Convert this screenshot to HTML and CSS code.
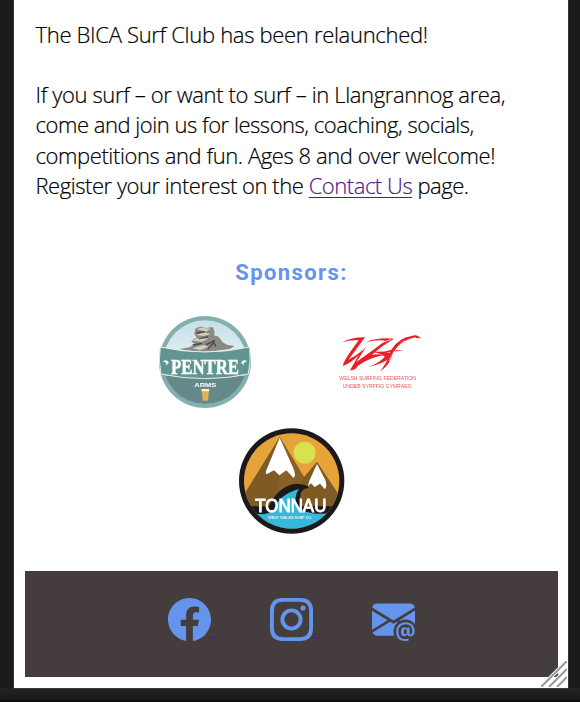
FILE: index.html
```html
<!DOCTYPE html>
<html lang="en">
<head>
<meta charset="utf-8">
<title>BICA Surf Club</title>
<link rel="stylesheet" href="styles.css">
</head>
<body>
<main class="page">
  <section class="news">
    <p><span class="line l1">The BICA Surf Club has been relaunched!</span></p>
    <p>
      <span class="line l2">If you surf – or want to surf – in Llangrannog area,</span>
      <span class="line l3">come and join us for lessons, coaching, socials,</span>
      <span class="line l4">competitions and fun. Ages 8 and over welcome!</span>
      <span class="line l5">Register your interest on the <a href="#">Contact Us</a> page.</span>
    </p>
  </section>
  <h2>Sponsors:</h2>
  <section class="sponsors">
    <svg class="pentre" viewBox="0 0 330 330">
      <defs><clipPath id="pc"><circle cx="165" cy="171" r="126"/></clipPath>
      <linearGradient id="sky" x2="0" y2="1"><stop stop-color="#c6dfe6"/><stop offset=".5" stop-color="#e6f1f4"/></linearGradient></defs>
      <circle cx="165" cy="171" r="138" fill="#83b0ae"/>
      <circle cx="165" cy="171" r="125" fill="url(#sky)"/>
      <g clip-path="url(#pc)"><path d="M20 208Q165 232 310 208V320H20Z" fill="#65888a"/></g>
      <path d="M88 132l30-5 18-10-12-7 7-8 10-2-8-13 4-18 16-4 15 4 20-3 6 14-2 11 14 4 12 17 13 7 22 4-12 8-45 7-55 3Z" fill="#8b8981"/>
      <path d="M139 72l15-4 28 3-14 9ZM125 107l28-11 22 5-20 9ZM138 90l25-8 20 5-22 6ZM127 130l34-10 14 5-25 11Z" fill="#d0cdc3"/>
      <path d="M140 84l25-4M147 101l27-5M128 120l28-5M169 119l26-13M173 133l18-20 7 12" fill="none" stroke="#454743" stroke-width="4"/>
      <path d="M31 126Q165 156 299 126Q304 166 295 207Q165 235 33 207Q24 166 31 126Z" fill="#5f9692" stroke="#e1efed" stroke-width="3"/>
      <text x="63" y="208" fill="#fff" stroke="#fff" stroke-width="1.5" font-family="Liberation Serif" font-size="66" font-weight="700" textLength="204" lengthAdjust="spacingAndGlyphs">PENTRE</text>
      <path d="M39 169q9-8 18 4l-9 8 1-7ZM291 169q-9-8-18 4l9 8-1-7Z" fill="#fff"/>
      <text x="133" y="246" fill="#fff" font-family="Liberation Sans" font-size="18" font-weight="700" textLength="66" lengthAdjust="spacingAndGlyphs">ARMS</text>
      <path d="M155 254h22l-3 33h-16Z" fill="#e1b254"/><path d="M154 252h24l-1 7h-22Z" fill="#fff1bb"/>
    </svg>
    <svg class="wsf" viewBox="0 0 300 210">
      <g fill="#e9202a">
        <path d="M36 52Q68 36 105 37L55 105Q82 88 109 65L79 111Q126 78 166 47Q142 44 108 51Q145 36 192 41Q155 62 126 89Q153 86 160 91Q118 98 83 123Q76 137 60 136L86 91Q62 115 39 123Q36 113 86 46Q60 44 36 52Z"/>
        <path d="M131 81Q178 75 185 91Q174 113 115 126Q153 111 164 95Q155 86 131 81Z"/>
        <path d="M245 33Q260 28 267 36Q232 37 205 63L195 76H222L190 80Q184 115 150 140Q175 107 180 81L157 82L184 74Q205 39 245 33ZM258 39l5-7 10 8Z"/>
      </g>
      <path d="M69 96Q108 70 134 47M103 84Q136 55 183 44M177 108Q195 70 223 46" fill="none" stroke="#fff" stroke-width="2"/>
      <g fill="#e9555b" font-family="Liberation Sans" font-size="17">
        <text x="28" y="165" textLength="230" lengthAdjust="spacingAndGlyphs">WELSH SURFING FEDERATION</text>
        <text x="38" y="188" textLength="207" lengthAdjust="spacingAndGlyphs">UNDEB SYRFFIO CYMRAEG</text>
      </g>
    </svg>
    <svg class="tonnau" viewBox="0 0 375 375">
      <defs><clipPath id="tc"><circle cx="185" cy="183" r="143"/></clipPath></defs>
      <circle cx="185" cy="183" r="158" fill="#1c191a"/>
      <g clip-path="url(#tc)">
        <rect width="375" height="375" fill="#e6a33a"/>
        <path d="M35 235L149 51L222 171L261 125L340 245V285H35Z" fill="#805a25"/>
        <path d="M149 51L222 171L211 191L180 205L146 248" fill="#8b6026"/>
        <path d="M149 53L190 145Q200 171 190 173L169 151L148 166L132 151L110 163Q104 159 113 141Z" fill="#fff"/>
        <path d="M261 132L286 180Q293 203 284 207L270 191L254 201L243 190L235 198Q234 193 240 178Z" fill="#fff"/>
        <circle cx="224" cy="98" r="33" fill="#dae150"/>
        <path d="M30 259H116Q145 198 198 191Q232 192 236 204Q198 207 217 259H350V350H30Z" fill="#1c191a"/>
        <path d="M67 278Q103 291 131 269Q149 222 207 207Q185 234 209 265Q240 289 310 278Q269 335 185 340Q111 333 67 278Z" fill="#35b8d9"/>
      </g>
      <text x="76" y="277" fill="#fff" stroke="#fff" stroke-width="3" font-family="Liberation Sans" font-size="56" textLength="213" lengthAdjust="spacingAndGlyphs">TONNAU</text>
      <text x="115" y="298" fill="#dff6fa" font-family="Liberation Sans" font-size="12" font-weight="700" textLength="132" lengthAdjust="spacingAndGlyphs">WEST WALES SURF CO.</text>
    </svg>
  </section>
  <footer>
    <a href="#" aria-label="Facebook"><svg viewBox="0 0 16 16"><path d="M16 8.049c0-4.446-3.582-8.05-8-8.05C3.58 0-.002 3.603-.002 8.05c0 4.017 2.926 7.347 6.75 7.951v-5.625h-2.03V8.05H6.75V6.275c0-2.017 1.195-3.131 3.022-3.131.876 0 1.791.157 1.791.157v1.98h-1.009c-.993 0-1.303.621-1.303 1.258v1.51h2.218l-.354 2.326H9.25V16c3.824-.604 6.75-3.934 6.75-7.951z"/></svg><i></i></a>
    <a href="#" aria-label="Instagram"><svg viewBox="0 0 16 16"><path fill-rule="evenodd" d="M4.7 0h6.6Q16 0 16 4.7v6.6Q16 16 11.3 16H4.7Q0 16 0 11.3V4.7Q0 0 4.7 0ZM4.8 1.44Q1.44 1.44 1.44 4.8v6.4q0 3.36 3.36 3.36h6.4q3.36 0 3.36-3.36V4.8q0-3.36-3.36-3.36ZM8 3.89a4.11 4.11 0 1 1 0 8.22 4.11 4.11 0 0 1 0-8.22Zm0 1.44a2.67 2.67 0 1 0 0 5.34 2.67 2.67 0 0 0 0-5.34Z"/><circle cx="12.27" cy="3.73" r=".96"/></svg><i></i></a>
    <a href="#" aria-label="Email"><svg viewBox="0 0 16 16"><path d="M2 2A2 2 0 0 0 .05 3.555L8 8.414l7.95-4.859A2 2 0 0 0 14 2H2Zm-2 9.8V4.698l5.803 3.546L0 11.801Zm6.761-2.97-6.57 4.026A2 2 0 0 0 2 14h6.256A4.493 4.493 0 0 1 8 12.5a4.49 4.49 0 0 1 1.606-3.446l-.367-.225L8 9.586l-1.239-.757ZM16 9.671V4.697l-5.803 3.546.338.208A4.482 4.482 0 0 1 12.5 8c1.414 0 2.675.652 3.5 1.671Z"/><path d="M15.834 12.244c0 1.168-.577 2.025-1.587 2.025-.503 0-1.002-.228-1.12-.648h-.043c-.118.416-.543.643-1.015.643-.77 0-1.259-.542-1.259-1.434v-.529c0-.844.481-1.4 1.26-1.4.585 0 .87.333.953.63h.03v-.568h.905v2.19c0 .272.18.42.411.42.315 0 .639-.415.639-1.39v-.118c0-1.277-.95-2.326-2.484-2.326h-.04c-1.582 0-2.64 1.067-2.64 2.724v.157c0 1.867 1.237 2.654 2.57 2.654h.045c.507 0 .935-.07 1.18-.18v.731c-.219.1-.643.175-1.237.175h-.044C10.438 16 9 14.82 9 12.646v-.214C9 10.36 10.421 9 12.485 9h.035c2.12 0 3.314 1.43 3.314 3.034v.21Zm-4.04.21v.227c0 .586.227.8.581.8.31 0 .564-.17.564-.743v-.367c0-.516-.275-.708-.572-.708-.346 0-.573.245-.573.791Z"/></svg></a>
  </footer>
  <svg class="grip" viewBox="0 0 26 26"><path d="M0 26L26 0M8 26L26 8M16 26L26 16" stroke="#fff" stroke-width="4"/><path d="M0 26L26 0M8 26L26 8M16 26L26 16" stroke="#9c9c9c" stroke-width="2.2"/></svg>
</main>
</body>
</html>
```
FILE: styles.css
```css
* { box-sizing: border-box; }
body {
  margin: 0;
  height: 702px;
  overflow: hidden;
  background: linear-gradient(#1a1b1c 688px, #222425 689px, #161718 700px, #08060a 702px);
}
.page {
  position: relative;
  width: 556px;
  height: 689px;
  margin-left: 13px;
  padding: 19px 10px 0 11px;
  background: #fff;
  border: solid #353738;
  border-width: 0 1px 1px;
}
.news {
  padding-left: 10.5px;
  font: 300 22px/30.2px "Open Sans", sans-serif;
  color: #000;
  -webkit-text-stroke: .2px;
}
.news p { margin: 0 0 30px; }
.line { display: block; white-space: nowrap; }
.l1 { letter-spacing: -.31px; }
.l2 { letter-spacing: -.37px; }
.l3 { letter-spacing: -.47px; }
.l4 { letter-spacing: -.41px; }
.l5 { letter-spacing: -.46px; }
.news a { color: #551a8b; text-decoration-thickness: 1px; text-underline-offset: 3px; }
h2 {
  margin: 58px 0 0;
  text-align: center;
  color: #6495ed;
  font: 700 22px/30px Roboto, sans-serif;
  letter-spacing: 1.4px;
}
.sponsors {
  display: grid;
  grid-template-columns: 110px 100px;
  column-gap: 70px;
  margin: 17px 0 0 125px;
  height: 266px;
  align-content: start;
}
.sponsors svg { display: block; filter: blur(.3px); }
.pentre { width: 110px; height: 110px; }
.wsf { width: 100px; height: 70px; margin-top: 20px; }
.tonnau { width: 125px; height: 125px; margin: 5px 0 0 80px; }
footer {
  display: flex;
  height: 106px;
  padding: 27px 0 0 143px;
  gap: 54px;
  background: #453d3d;
}
footer a { display: flex; width: 48px; height: 43px; align-items: flex-end; }
footer svg { width: 43px; height: 43px; flex: none; fill: #6495ed; }
footer i { width: 5px; height: 2px; margin-bottom: 2px; background: #551a8b; }
.grip { position: absolute; right: 1px; bottom: 1px; width: 26px; height: 26px; }
```
